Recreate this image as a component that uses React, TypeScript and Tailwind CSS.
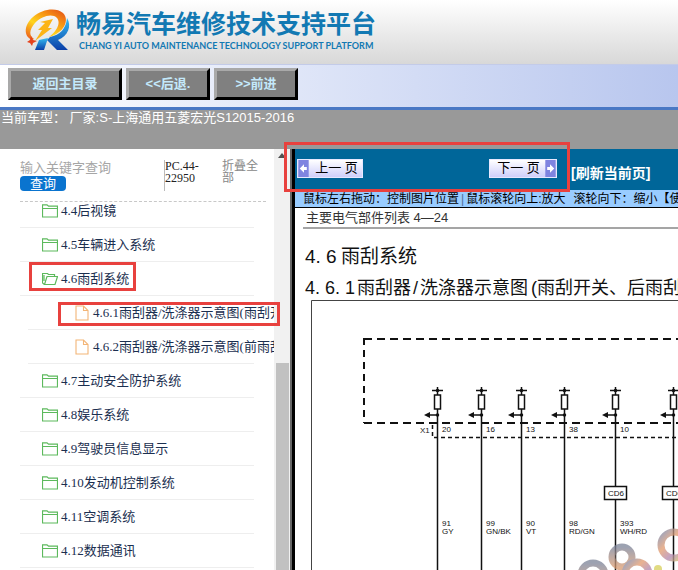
import React from 'react';

interface TreeNode {
  id: string;
  label: string;
  open?: boolean;
  children?: { id: string; label: string }[];
}

const tree: TreeNode[] = [
  { id: '4.4', label: '4.4后视镜' },
  { id: '4.5', label: '4.5车辆进入系统' },
  {
    id: '4.6',
    label: '4.6雨刮系统',
    open: true,
    children: [
      { id: '4.6.1', label: '4.6.1雨刮器/洗涤器示意图(雨刮开关)' },
      { id: '4.6.2', label: '4.6.2雨刮器/洗涤器示意图(前雨刮)' },
    ],
  },
  { id: '4.7', label: '4.7主动安全防护系统' },
  { id: '4.8', label: '4.8娱乐系统' },
  { id: '4.9', label: '4.9驾驶员信息显示' },
  { id: '4.10', label: '4.10发动机控制系统' },
  { id: '4.11', label: '4.11空调系统' },
  { id: '4.12', label: '4.12数据通讯' },
];

const wires = [
  { x: 141, pin: '20', code: '91', color: 'GY' },
  { x: 185, pin: '16', code: '99', color: 'GN/BK' },
  { x: 225, pin: '13', code: '90', color: 'VT' },
  { x: 268, pin: '38', code: '98', color: 'RD/GN' },
  { x: 319, pin: '10', code: '393', color: 'WH/RD', splice: 'CD6' },
  { x: 377, pin: '9', code: '394', color: 'BU', splice: 'CD6' },
];

function Logo() {
  return (
    <svg viewBox="0 0 48 44" className="h-11 w-12 shrink-0" aria-hidden="true">
      <defs>
        <linearGradient id="flame" x1="1" y1="0" x2="0.2" y2="1">
          <stop offset="0" stopColor="#e04a18" />
          <stop offset="0.3" stopColor="#f58a12" />
          <stop offset="0.65" stopColor="#ffd61c" />
          <stop offset="1" stopColor="#ee6a1c" />
        </linearGradient>
        <linearGradient id="leg" x1="0" y1="0" x2="0" y2="1">
          <stop offset="0" stopColor="#35bdf2" />
          <stop offset="1" stopColor="#0b3fa8" />
        </linearGradient>
      </defs>
      <path d="M15 32 L24 30 L20 42 H11 Z" fill="url(#leg)" />
      <path d="M26 29 C36 27 42 21 43 10 C48 18 44 28 34 32 L44 42 H33 L23 32 Z" fill="url(#leg)" />
      <path
        d="M8 32 C-1 28 0 17 9 9 C18 1 32 -1 39 5 C46 12 40 25 25 29 C33 23 37 15 33 10 C28 5 18 8 11 15 C6 21 4 27 10 31 Z"
        fill="url(#flame)"
      />
      <path d="M16 14 L29 11 L24 20 L28 20 L11 33 L18 22 L14 22 L21 15 Z" fill="#fcb416" />
      <path d="M7 28 L9 32 L13 33 L9 35 L8 38 L6 35 L3 34 L6 32 Z" fill="#e5431c" />
    </svg>
  );
}

function FolderIcon({ open }: { open?: boolean }) {
  return (
    <svg viewBox="0 0 16 14" className="h-3.5 w-4 shrink-0" fill="none" stroke="#5cb95c" aria-hidden="true">
      {open ? (
        <path d="M2.5 12.5 L0.5 11 V1.5 H5.5 L6.5 2.5 H12.5 V4.5 M2.5 12.5 L5 4.5 H15.5 L13 12.5 Z M2 3 V9" strokeWidth="1.2" />
      ) : (
        <path d="M0.5 13 V0.8 H5 L6.5 2.2 H15.5 V13 Z M0.5 4.5 H15.5" strokeWidth="1.2" />
      )}
    </svg>
  );
}

function FileIcon() {
  return (
    <svg viewBox="0 0 14 16" className="h-4 w-3.5 shrink-0" fill="none" stroke="#f3b577" strokeWidth="1.1" aria-hidden="true">
      <path d="M1 1 H8.5 L13 5.5 V15 H1 Z M8.5 1 V5.5 H13" />
    </svg>
  );
}

function HeaderButton({ children, className }: { children: React.ReactNode; className: string }) {
  return (
    <button
      className={`h-8 cursor-pointer border-3 border-t-[#a9a9a9] border-r-black border-b-black border-l-[#a9a9a9] bg-[#808080] text-[13px] font-bold text-[#c4e9fb] ${className}`}
    >
      {children}
    </button>
  );
}

function Sidebar() {
  return (
    <aside className="flex w-[274px] shrink-0 flex-col overflow-hidden bg-white pl-5">
      <form className="mr-2 flex h-[53px] shrink-0 border-b border-dashed border-[#c8c8c8] pt-[11px]" onSubmit={(e) => e.preventDefault()}>
        <div className="w-36">
          <input
            aria-label="输入关键字查询"
            placeholder="输入关键字查询"
            className="block h-4 w-full text-[13px] leading-4 outline-none placeholder:text-[#a6a6a6]"
          />
          <button className="block h-[15px] w-[46px] cursor-pointer rounded-sm bg-[#0a74cf] text-[13px] leading-[14px] text-white">查询</button>
        </div>
        <div className="h-[31px] w-[58px] border-l border-[#bbb] font-['Liberation_Serif',serif] text-xs leading-3 text-[#222]">
          PC.44-
          <br />
          22950
        </div>
        <button type="button" className="h-6 w-9 cursor-pointer text-left text-xs leading-3 text-[#888]">
          折叠全部
        </button>
      </form>

      <nav className="min-h-0 flex-1 overflow-hidden">
        <ul className="-mt-2 font-['Liberation_Serif','Noto_Sans_CJK_SC',serif] text-[13px] whitespace-nowrap text-[#1b2f50]">
          {tree.map((node) => (
            <li key={node.id}>
              <a href={`#${node.id}`} className="mr-5 flex h-[34px] items-center gap-[3px] border-b border-[#eeeeee] pl-[22px]">
                <FolderIcon open={node.open} />
                {node.label}
              </a>
              {node.children && (
                <ul>
                  {node.children.map((child) => (
                    <li key={child.id}>
                      <a href={`#${child.id}`} className="mr-5 ml-2 flex h-[34px] items-center gap-1 border-b border-[#eeeeee] pl-[47px]">
                        <FileIcon />
                        {child.label}
                      </a>
                    </li>
                  ))}
                </ul>
              )}
            </li>
          ))}
        </ul>
      </nav>
    </aside>
  );
}

function Scrollbar() {
  return (
    <div className="flex w-4 shrink-0 flex-col items-center bg-[#f1f1f1] pt-1">
      <svg viewBox="0 0 8 5" className="h-[5px] w-2" aria-hidden="true">
        <path d="M0 5 L4 0 L8 5 Z" fill="#505050" />
      </svg>
      <div className="mt-[205px] w-[13px] flex-1 bg-[#c1c1c1]" />
    </div>
  );
}

function PageArrow({ next }: { next?: boolean }) {
  return (
    <svg viewBox="0 0 11 18" className="h-full w-[11px] shrink-0" aria-hidden="true">
      <rect width="11" height="18" fill="#7f84e0" />
      <path d={next ? 'M2 7.5 H5 V4.5 L9.5 9 L5 13.5 V10.5 H2 Z' : 'M9 7.5 H6 V4.5 L1.5 9 L6 13.5 V10.5 H9 Z'} fill="#fff" />
    </svg>
  );
}

function WiringDiagram() {
  return (
    <svg viewBox="0 0 420 272" className="ml-px block h-[272px] w-[420px] max-w-none font-['Liberation_Sans',sans-serif] text-[8px]">
      <defs>
        <linearGradient id="ring" x1="0" y1="0" x2="1" y2="1">
          <stop offset="0" stopColor="#7d86a8" />
          <stop offset="0.35" stopColor="#e39a6c" />
          <stop offset="0.65" stopColor="#b184ae" />
          <stop offset="1" stopColor="#ddd04e" />
        </linearGradient>
        <linearGradient id="ringGray" x1="0" y1="0" x2="0" y2="1">
          <stop offset="0" stopColor="#7c8398" />
          <stop offset="1" stopColor="#d79a72" />
        </linearGradient>
      </defs>

      {/* Sheet border */}
      <path d="M420 2.5 H15.5 V272" fill="none" stroke="#444" />

      {/* Module outline */}
      <path d="M68 41 H420" stroke="#111" strokeWidth="2" strokeDasharray="8 5" />
      <path d="M68 40 V125" stroke="#111" strokeWidth="2" strokeDasharray="7 5" />
      <path d="M68 125 H420" stroke="#111" strokeWidth="2" strokeDasharray="8 5" />

      {/* Connector X1 */}
      <path d="M136.5 127 V139.5 H420" fill="none" stroke="#111" strokeWidth="1.5" strokeDasharray="4 3" />
      <text x="124" y="135" fill="#222">X1</text>

      {wires.map((w) => (
        <g key={w.x} stroke="#111" strokeWidth="1.5">
          <path d={`M${w.x - 5} 92.5 H${w.x + 6} M${w.x + 0.5} 89 V97 M${w.x + 0.5} 111 V272`} />
          <circle cx={w.x + 0.5} cy="92.5" r="1" />
          <rect x={w.x - 2.5} y="97" width="6" height="14" fill="#fff" />
          <path d={`M${w.x} 117 H${w.x - 10}`} />
          <path d={`M${w.x - 13} 117 l6 -3 v6 Z`} fill="#111" stroke="none" />
          <circle cx={w.x + 0.5} cy="117" r="1" />
          {w.splice && <rect x={w.x - 10.5} y="188.5" width="22" height="13" fill="#fff" />}
          <g stroke="none" fill="#111">
            <text x={w.x + 5} y="134">{w.pin}</text>
            {w.splice && <text x={w.x - 7} y="198">{w.splice}</text>}
            <text x={w.x + 5} y="228">{w.code}</text>
            <text x={w.x + 5} y="236">{w.color}</text>
          </g>
        </g>
      ))}

      {/* Watermark */}
      <g fill="none" opacity="0.75">
        <circle cx="326" cy="259" r="10" stroke="url(#ringGray)" strokeWidth="7" />
        <circle cx="341" cy="276" r="12" stroke="url(#ring)" strokeWidth="7" />
        <circle cx="297" cy="277" r="12" stroke="url(#ringGray)" strokeWidth="7" />
        <circle cx="378" cy="247" r="13" stroke="url(#ring)" strokeWidth="7" />
        <circle cx="362" cy="271" r="4" fill="#d8cf5a" />
      </g>
    </svg>
  );
}

function Viewer() {
  return (
    <main className="flex min-w-0 flex-1 flex-col overflow-hidden border-l-3 border-black bg-white">
      <div className="flex h-[41px] shrink-0 items-start bg-[#006699] pt-[10px] pl-0.5">
        <button className="flex h-[19px] w-[66px] shrink-0 cursor-pointer items-stretch border border-[#e8e8ff] bg-linear-to-b from-white to-[#cfcffa] text-[13px] leading-4 text-black">
          <PageArrow />
          <span className="flex-1 pl-0.5">上一 页</span>
        </button>
        <button className="ml-[126px] flex h-[19px] w-[68px] shrink-0 cursor-pointer items-stretch border border-[#e8e8ff] bg-linear-to-b from-white to-[#cfcffa] text-[13px] leading-4 text-black">
          <span className="flex-1 pl-0.5">下一 页</span>
          <PageArrow next />
        </button>
        <a href="#refresh" className="mt-1 ml-3.5 shrink-0 text-sm font-bold whitespace-nowrap text-white">
          [刷新当前页]
        </a>
      </div>
      <div className="flex h-[18px] shrink-0 items-center border-b border-black bg-[#99ccff] pl-2 text-xs whitespace-nowrap text-black">
        <span className="shrink-0">鼠标左右拖动：控制图片位置</span>
        <span className="mx-0.5 text-[#4d6f99]">|</span>
        <span className="shrink-0">鼠标滚轮向上:放大</span>
        <span className="ml-2 shrink-0">滚轮向下：缩小【使用</span>
      </div>

      <article className="min-h-0 flex-1 overflow-hidden whitespace-nowrap text-[#111]">
        <p className="ml-2 h-[21px] border-b-2 border-[#a5a5a5] pl-[3px] text-[13px] leading-5 text-[#333]">主要电气部件列表 4—24</p>
        <h1 className="mt-3.5 flex h-7 items-center pl-2.5 text-[19px]">
          <span className="w-9">4. 6</span>雨刮系统
        </h1>
        <h2 className="mt-1.5 flex h-[21px] items-center pl-2.5 text-lg">
          <span className="w-[52px] shrink-0">4. 6. 1</span>
          <span>雨刮器</span>
          <span className="w-[9px] shrink-0 text-center">/</span>
          <span>洗涤器示意图</span>
          <span className="w-[9px] shrink-0 text-right">(</span>
          <span>雨刮开关、后雨刮器)</span>
        </h2>
        <WiringDiagram />
      </article>
    </main>
  );
}

export default function App() {
  return (
    <div className="flex h-screen flex-col overflow-hidden bg-[#999999] font-['Liberation_Sans','Noto_Sans_CJK_SC',sans-serif]">
      <header className="flex h-16 shrink-0 items-start bg-linear-to-b from-white to-[#d8d8d8] pt-2 pl-6">
        <Logo />
        <div className="ml-1 whitespace-nowrap text-[#1279b3]">
          <div className="h-[33px] text-[25px] leading-[33px] font-bold">畅易汽车维修技术支持平台</div>
          <div className="pl-[3px] font-[Lato,sans-serif] text-[9px] leading-[10px] font-bold">CHANG YI AUTO MAINTENANCE TECHNOLOGY SUPPORT PLATFORM</div>
        </div>
      </header>

      <div className="flex h-[46px] shrink-0 items-start gap-1 border-t border-b-3 border-t-[#c3cbe8] border-b-[#4a78c4] bg-linear-to-r from-white to-[#b8c6ee] pt-[3px] pl-2">
        <HeaderButton className="w-[114px]">返回主目录</HeaderButton>
        <HeaderButton className="w-[84px]">&lt;&lt;后退.</HeaderButton>
        <HeaderButton className="w-[84px]">&gt;&gt;前进</HeaderButton>
      </div>

      <div className="h-[39px] shrink-0 pl-px text-[13px] leading-[15px] whitespace-nowrap text-white">
        当前车型： 厂家:S-上海通用五菱宏光S12015-2016
      </div>

      <div className="relative flex min-h-0 flex-1">
        <Sidebar />
        <Scrollbar />
        <div className="w-0.5 shrink-0 bg-[#666]" />
        <Viewer />

        {/* Highlight frames laid over the panes */}
        <div className="pointer-events-none absolute top-[-7px] left-[284px] h-[50px] w-[286px] border-3 border-[#e8413e]" />
        <div className="pointer-events-none absolute top-[113px] left-[29px] h-[29px] w-[107px] border-3 border-[#e8413e]" />
        <div className="pointer-events-none absolute top-[153px] left-[58px] h-6 w-[222px] border-3 border-[#e8413e]" />
      </div>
    </div>
  );
}
